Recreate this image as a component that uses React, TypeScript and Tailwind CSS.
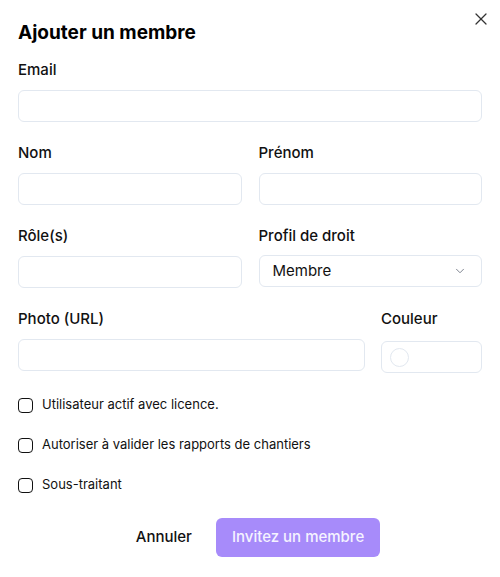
import { X, ChevronDown } from "lucide-react";

function Field({ label, className = "" }: { label: string; className?: string }) {
  return (
    <div className={`flex flex-col gap-[9px] ${className}`}>
      <label className="text-[15px] font-medium leading-[22px] text-[#111111]">{label}</label>
      <input className="h-[32px] w-full rounded-md border border-[#e2e8f0] bg-white px-3 text-[15px] outline-none" />
    </div>
  );
}

function Check({ label }: { label: string }) {
  return (
    <label className="flex h-5 items-center gap-[9px] text-[13px] text-[#111111]">
      <span className="h-[15px] w-[15px] shrink-0 rounded-[4px] border-[1.5px] border-[#111111]" />
      <span>{label}</span>
    </label>
  );
}

export default function App() {
  return (
    <div className="relative min-h-[577px] w-[500px] bg-white px-[18px] pt-[18px] font-['Inter',sans-serif]">
      <button className="absolute right-[9px] top-[9px] text-[#333333]">
        <X size={20} strokeWidth={1.5} />
      </button>
      <h2 className="text-[19px] font-bold leading-[30px] text-black">Ajouter un membre</h2>

      <div className="mt-[11px] flex flex-col gap-[20px]">
        <Field label="Email" />
        <div className="grid grid-cols-2 gap-[17px]">
          <Field label="Nom" />
          <Field label="Prénom" />
        </div>
        <div className="grid grid-cols-2 gap-[17px]">
          <Field label="Rôle(s)" />
          <div className="flex flex-col gap-[9px]">
            <label className="text-[15px] font-medium leading-[22px] text-[#111111]">Profil de droit</label>
            <div className="-mt-px flex h-[32px] items-center justify-between rounded-md border border-[#e2e8f0] bg-white pl-[13px] pr-[14px]">
              <span className="text-[15px] text-[#111111]">Membre</span>
              <ChevronDown size={14} strokeWidth={1.5} className="text-[#6b7280]" />
            </div>
          </div>
        </div>
        <div className="flex gap-[16px]">
          <Field label="Photo (URL)" className="flex-1" />
          <div className="flex w-[101px] flex-col gap-[9px]">
            <label className="text-[15px] font-medium leading-[22px] text-[#111111]">Couleur</label>
            <div className="mt-[2px] flex h-[32px] items-center rounded-md border border-[#e2e8f0] bg-white pl-[8px]">
              <span className="h-[19px] w-[19px] rounded-full border border-[#e2e8f0]" />
            </div>
          </div>
        </div>
      </div>

      <div className="mt-[22px] flex flex-col gap-[20px]">
        <Check label="Utilisateur actif avec licence." />
        <Check label="Autoriser à valider les rapports de chantiers" />
        <Check label="Sous-traitant" />
      </div>

      <div className="mt-[23px] flex justify-center gap-2">
        <button className="h-[39px] rounded-md px-4 text-[15px] font-medium text-[#111111]">Annuler</button>
        <button className="h-[39px] rounded-md bg-[#a78bfa] px-[16px] text-[15px] font-medium text-[#f5f3ff]">
          Invitez un membre
        </button>
      </div>
    </div>
  );
}
